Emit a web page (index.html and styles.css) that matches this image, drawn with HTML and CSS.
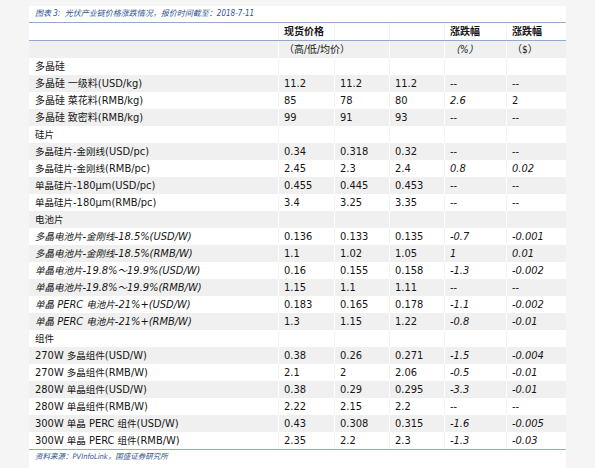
FILE: index.html
```html
<!DOCTYPE html>
<html lang="zh">
<head>
<meta charset="utf-8">
<title>光伏产业链价格涨跌情况</title>
<link rel="stylesheet" href="styles.css">
</head>
<body>
<div class="panel">
  <div class="caption">图表 3:&nbsp; 光伏产业链价格涨跌情况，报价时间截至：2018-7-11</div>
  <table class="prices">
    <colgroup>
      <col class="c-name"><col class="c-hi"><col class="c-lo"><col class="c-avg"><col class="c-pct"><col class="c-usd">
    </colgroup>
    <thead>
      <tr class="head">
        <td></td><td class="hd">现货价格</td><td></td><td></td><td class="hd">涨跌幅</td><td class="hd">涨跌幅</td>
      </tr>
    </thead>
    <tbody>
      <tr class="odd"><td></td><td class="spill sub">（高/低/均价）</td><td></td><td></td><td class="it sub">（%）</td><td class="sub">（$）</td></tr>
      <tr><td><span class="zh-lg">多晶硅</span></td><td></td><td></td><td></td><td></td><td></td></tr>
      <tr class="odd"><td><span class="zh-lg">多晶硅 一级料</span>(USD/kg)</td><td>11.2</td><td>11.2</td><td>11.2</td><td>--</td><td>--</td></tr>
      <tr><td><span class="zh-lg">多晶硅 菜花料</span>(RMB/kg)</td><td>85</td><td>78</td><td>80</td><td class="it">2.6</td><td>2</td></tr>
      <tr class="odd"><td><span class="zh-lg">多晶硅 致密料</span>(RMB/kg)</td><td>99</td><td>91</td><td>93</td><td>--</td><td>--</td></tr>
      <tr><td><span class="zh">硅片</span></td><td></td><td></td><td></td><td></td><td></td></tr>
      <tr class="odd"><td><span class="zh">多晶硅片</span>-<span class="zh">金刚线</span>(USD/pc)</td><td>0.34</td><td>0.318</td><td>0.32</td><td>--</td><td>--</td></tr>
      <tr><td><span class="zh">多晶硅片</span>-<span class="zh">金刚线</span>(RMB/pc)</td><td>2.45</td><td>2.3</td><td>2.4</td><td class="it">0.8</td><td class="it">0.02</td></tr>
      <tr class="odd"><td><span class="zh">单晶硅片</span>-180μm(USD/pc)</td><td>0.455</td><td>0.445</td><td>0.453</td><td>--</td><td>--</td></tr>
      <tr><td><span class="zh">单晶硅片</span>-180μm(RMB/pc)</td><td>3.4</td><td>3.25</td><td>3.35</td><td>--</td><td>--</td></tr>
      <tr class="odd"><td><span class="zh">电池片</span></td><td></td><td></td><td></td><td></td><td></td></tr>
      <tr><td class="it"><span class="zh">多晶电池片</span>-<span class="zh">金刚线</span>-18.5%(USD/W)</td><td>0.136</td><td>0.133</td><td>0.135</td><td class="it">-0.7</td><td class="it">-0.001</td></tr>
      <tr class="odd"><td class="it"><span class="zh">多晶电池片</span>-<span class="zh">金刚线</span>-18.5%(RMB/W)</td><td>1.1</td><td>1.02</td><td>1.05</td><td class="it">1</td><td class="it">0.01</td></tr>
      <tr><td class="it"><span class="zh">单晶电池片</span>-19.8%<span class="zh">～</span>19.9%(USD/W)</td><td>0.16</td><td>0.155</td><td>0.158</td><td class="it">-1.3</td><td class="it">-0.002</td></tr>
      <tr class="odd"><td class="it"><span class="zh">单晶电池片</span>-19.8%<span class="zh">～</span>19.9%(RMB/W)</td><td>1.15</td><td>1.1</td><td>1.11</td><td>--</td><td>--</td></tr>
      <tr><td class="it"><span class="zh">单晶</span> PERC <span class="zh">电池片</span>-21%+(USD/W)</td><td>0.183</td><td>0.165</td><td>0.178</td><td class="it">-1.1</td><td class="it">-0.002</td></tr>
      <tr class="odd"><td class="it"><span class="zh">单晶</span> PERC <span class="zh">电池片</span>-21%+(RMB/W)</td><td>1.3</td><td>1.15</td><td>1.22</td><td class="it">-0.8</td><td class="it">-0.01</td></tr>
      <tr><td><span class="zh">组件</span></td><td></td><td></td><td></td><td></td><td></td></tr>
      <tr class="odd"><td>270W <span class="zh">多晶组件</span>(USD/W)</td><td>0.38</td><td>0.26</td><td>0.271</td><td class="it">-1.5</td><td class="it">-0.004</td></tr>
      <tr><td>270W <span class="zh">多晶组件</span>(RMB/W)</td><td>2.1</td><td>2</td><td>2.06</td><td class="it">-0.5</td><td class="it">-0.01</td></tr>
      <tr class="odd"><td>280W <span class="zh">单晶组件</span>(USD/W)</td><td>0.38</td><td>0.29</td><td>0.295</td><td class="it">-3.3</td><td class="it">-0.01</td></tr>
      <tr><td>280W <span class="zh">单晶组件</span>(RMB/W)</td><td>2.22</td><td>2.15</td><td>2.2</td><td>--</td><td>--</td></tr>
      <tr class="odd"><td>300W <span class="zh">单晶</span> PERC <span class="zh">组件</span>(USD/W)</td><td>0.43</td><td>0.308</td><td>0.315</td><td class="it">-1.6</td><td class="it">-0.005</td></tr>
      <tr class="last"><td>300W <span class="zh">单晶</span> PERC <span class="zh">组件</span>(RMB/W)</td><td>2.35</td><td>2.2</td><td>2.3</td><td class="it">-1.3</td><td class="it">-0.03</td></tr>
    </tbody>
  </table>
  <div class="source">资料来源：PVInfoLink，国盛证券研究所</div>
</div>
</body>
</html>
```
FILE: styles.css
```css
html, body {
  margin: 0;
  padding: 0;
}
body {
  background: #f5f5f5;
  height: 468px;
  overflow: hidden;
  font-family: "DejaVu Sans Condensed", "Open Sans", "Noto Sans CJK SC", sans-serif;
  color: #161616;
}
.panel {
  margin: 6px 0 0 29px;
  width: 537px;
  height: 462px;
  background: #ffffff;
}
.caption {
  height: 16px;
  line-height: 16px;
  padding-left: 6px;
  font-size: 8px;
  font-style: italic;
  color: #2f5296;
}
.prices {
  width: 537px;
  table-layout: fixed;
  border-collapse: separate;
  border-spacing: 0;
  font-size: 11px;
}
.c-name { width: 249px; }
.c-hi { width: 56px; }
.c-lo { width: 55px; }
.c-avg { width: 55px; }
.c-pct { width: 62px; }
.c-usd { width: 60px; }
.prices td {
  height: 17px;
  line-height: 17px;
  padding: 0 0 0 6px;
  white-space: nowrap;
  overflow: hidden;
  box-shadow: inset 1px 0 0 #f3f3f3;
}
.prices td:first-child {
  box-shadow: none;
}
.prices tr.odd td {
  background: #f0f0f0;
  box-shadow: inset 1px 0 0 #ffffff;
}
.prices tr.odd td:first-child {
  box-shadow: none;
}
.prices td.spill {
  overflow: visible;
  position: relative;
  z-index: 1;
}
.prices .head td {
  border-top: 1px solid #91a9cf;
  border-bottom: 1px solid #91a9cf;
}
.prices tr.last td {
  height: 16px;
  border-bottom: 1px solid #91a9cf;
}
.hd {
  font-weight: bold;
  font-size: 10px;
}
.sub {
  font-size: 10px;
}
.zh-lg {
  font-size: 10px;
  line-height: 1;
}
.zh {
  font-size: 9.5px;
  line-height: 1;
}
.it {
  font-style: italic;
}
.source {
  height: 14px;
  line-height: 14px;
  padding-left: 6px;
  font-size: 7.5px;
  font-style: italic;
  color: #2f5296;
}
```
